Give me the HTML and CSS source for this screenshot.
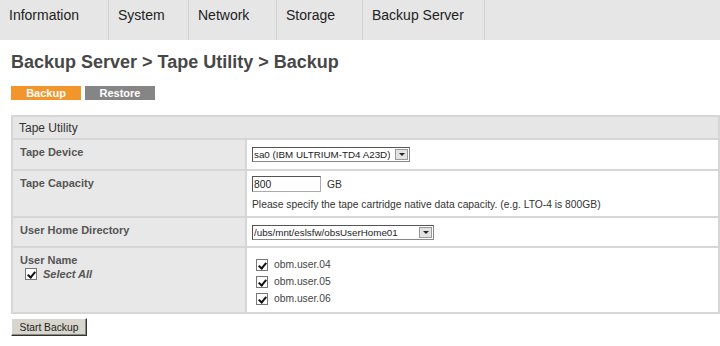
FILE: index.html
```html
<!DOCTYPE html>
<html lang="en">
<head>
    <meta charset="UTF-8">
    <title>Backup Server - Tape Utility</title>
    <link rel="stylesheet" href="styles.css">
</head>
<body>
    <nav class="menu">
        <a href="#">Information</a>
        <a href="#">System</a>
        <a href="#">Network</a>
        <a href="#">Storage</a>
        <a href="#">Backup Server</a>
    </nav>
    <main>
        <h1 class="title">Backup Server &gt; Tape Utility &gt; Backup</h1>
        <div class="tabs">
            <a href="#" class="tab active">Backup</a>
            <a href="#" class="tab">Restore</a>
        </div>
        <table class="form">
            <tr>
                <th colspan="2" class="head">Tape Utility</th>
            </tr>
            <tr class="r-dev">
                <td class="label">Tape Device</td>
                <td class="value">
                    <div class="select dev"><span>sa0 (IBM ULTRIUM-TD4 A23D)</span><i class="arrow"></i></div>
                </td>
            </tr>
            <tr>
                <td class="label">Tape Capacity</td>
                <td class="value">
                    <div class="cap"><input type="text" value="800" class="text"><span>GB</span></div>
                    <p class="hint">Please specify the tape cartridge native data capacity. (e.g. LTO-4 is 800GB)</p>
                </td>
            </tr>
            <tr class="r-home">
                <td class="label">User Home Directory</td>
                <td class="value">
                    <div class="select home"><span>/ubs/mnt/eslsfw/obsUserHome01</span><i class="arrow"></i></div>
                </td>
            </tr>
            <tr>
                <td class="label">
                    User Name
                    <label class="all"><i class="check"></i><em>Select All</em></label>
                </td>
                <td class="value users">
                    <label><i class="check"></i>obm.user.04</label>
                    <label><i class="check"></i>obm.user.05</label>
                    <label><i class="check"></i>obm.user.06</label>
                </td>
            </tr>
        </table>
        <button type="button" class="start">Start Backup</button>
    </main>
</body>
</html>
```
FILE: styles.css
```css
*{
    box-sizing: border-box;
}
body{
    margin: 0;
    font-family: "Liberation Sans", Arial, sans-serif;
    font-size: 10.3px;
    color: #333;
    background: #fff;
}
.menu{
    display: flex;
    height: 40px;
    background: #e6e6e6;
    & a{
        display: block;
        height: 100%;
        padding: 7px 0 0 9px;
        color: #222;
        text-decoration: none;
        font-size: 14px;
        border-right: 1px solid #d2d2d2;
    }
    & a:nth-child(1){ width: 109px; }
    & a:nth-child(2){ width: 80px; }
    & a:nth-child(3){ width: 88px; }
    & a:nth-child(4){ width: 86px; }
    & a:nth-child(5){ width: 122px; }
}
main{
    padding: 0 0 0 11px;
}
.title{
    margin: 11px 0 0;
    font-size: 18px;
    font-weight: bold;
    color: #474747;
    line-height: 22px;
}
.tabs{
    display: flex;
    gap: 4px;
    margin-top: 13px;
    & .tab{
        width: 70px;
        height: 14px;
        line-height: 14px;
        text-align: center;
        color: #fff;
        font-weight: bold;
        font-size: 11px;
        text-decoration: none;
        background: #858585;
    }
    & .tab.active{
        background: #f2952a;
    }
}
.form{
    margin-top: 15px;
    width: 709px;
    border-collapse: collapse;
    border: 2px solid #d6d6d6;
    & td, & th{
        border: 2px solid #d6d6d6;
        vertical-align: top;
    }
}
.head{
    text-align: left;
    font-weight: normal;
    font-size: 12px;
    color: #333;
    background: #e6e6e6;
    height: 23px;
    padding: 4px 6px 3px;
}
.label{
    width: 234px;
    background: #e8e8e8;
    font-weight: bold;
    font-size: 11px;
    color: #555;
    padding: 6px 7px;
}
.r-dev td{
    height: 31px;
}
.r-home td{
    height: 30px;
}
.value{
    padding: 4px 5px;
}
.select{
    display: inline-flex;
    align-items: center;
    justify-content: space-between;
    height: 15px;
    border: 1px solid #888;
    border-top-color: #555;
    border-left-color: #555;
    background: #fff;
    color: #222;
    font-size: 9.8px;
    padding-left: 1px;
    white-space: nowrap;
    & span{
        overflow: hidden;
    }
    & .arrow{
        flex: none;
        width: 13px;
        height: 11px;
        margin-right: 1px;
        background: #e2e2e2;
        border: 1px solid #999;
        position: relative;
    }
    & .arrow::after{
        content: "";
        position: absolute;
        left: 3px;
        top: 3px;
        border: 3px solid transparent;
        border-top: 3px solid #222;
    }
}
.select.dev{ width: 158px; margin-top: 3px; }
.select.home{ width: 182px; margin-top: 3px; }
.cap{
    display: flex;
    align-items: center;
    gap: 6px;
    margin-top: 1px;
    & .text{
        width: 69px;
        height: 16px;
        padding: 0 1px;
        font-family: inherit;
        font-size: 10.3px;
        color: #222;
        border: 1px solid #aaa;
        border-top-color: #555;
        border-left-color: #555;
    }
}
.hint{
    margin: 7px 0 2px;
}
.all{
    display: flex;
    align-items: center;
    gap: 6px;
    margin: 2px 0 0 5px;
    & em{
        font-weight: bold;
        color: #555;
    }
}
.users{
    padding: 8px 0 5px 9px;
    & label{
        display: flex;
        align-items: center;
        gap: 6px;
        height: 17px;
        color: #444;
    }
}
.check{
    display: inline-block;
    width: 12px;
    height: 12px;
    border: 1px solid #777;
    background: #fff;
    position: relative;
    &::after{
        content: "";
        position: absolute;
        left: 3px;
        top: 1px;
        width: 3px;
        height: 6px;
        border: solid #111;
        border-width: 0 2px 2px 0;
        transform: rotate(40deg);
    }
}
.start{
    margin-top: 4px;
    height: 18px;
    width: 76px;
    padding: 0;
    font-family: inherit;
    font-size: 10.3px;
    color: #222;
    background: #d8d5cc;
    border: 1px solid;
    border-color: #fff #333 #333 #fff;
    box-shadow: inset -1px -1px 0 #888;
}
```
